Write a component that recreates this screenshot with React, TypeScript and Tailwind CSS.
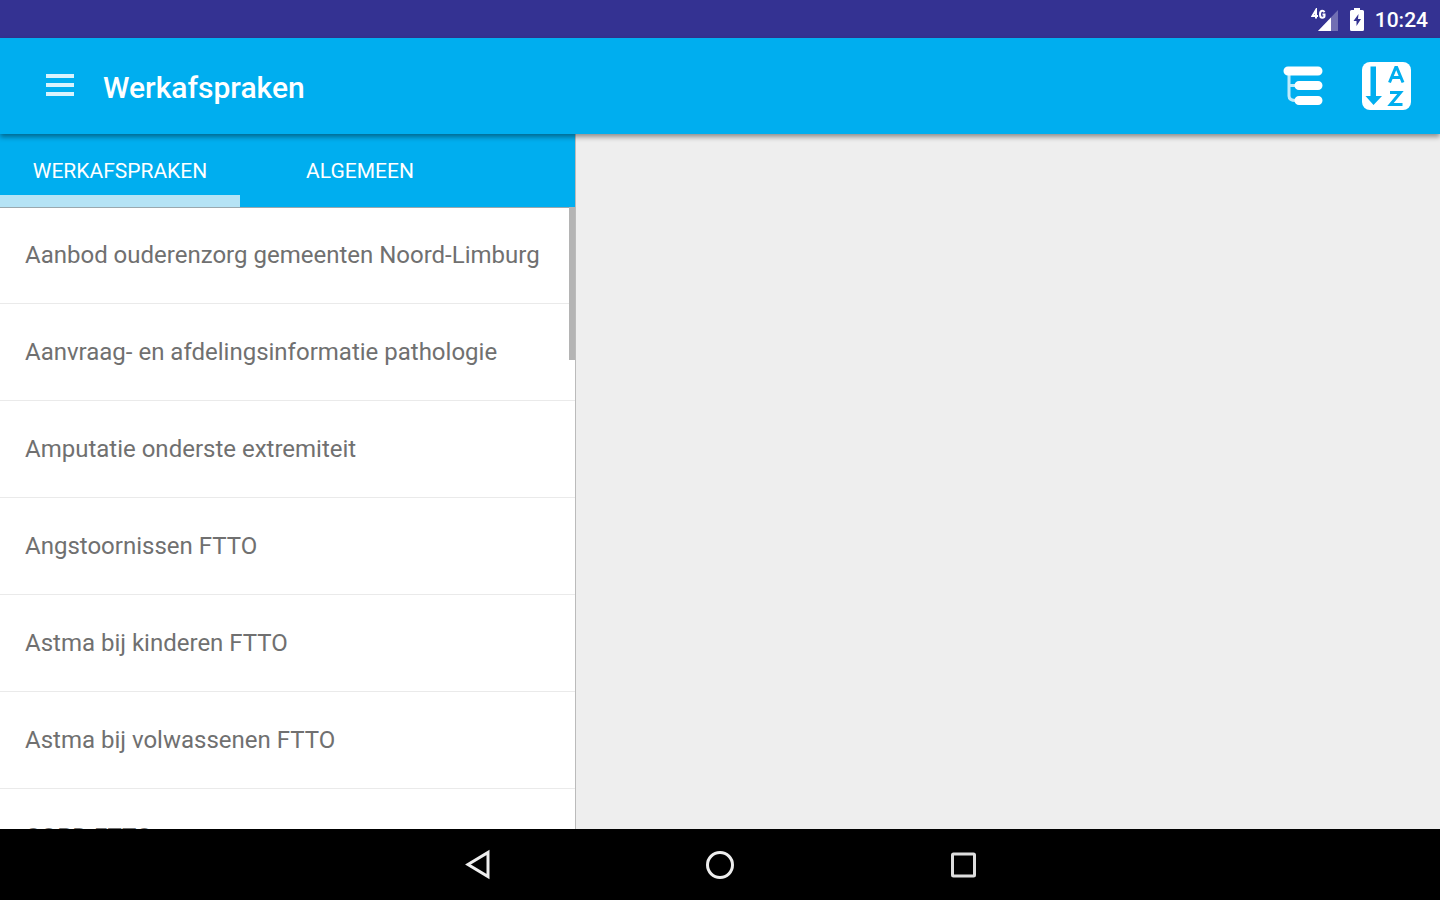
import { useState } from "react"

const tabs = ["Werkafspraken", "Algemeen"]

const items = [
    "Aanbod ouderenzorg gemeenten Noord-Limburg",
    "Aanvraag- en afdelingsinformatie pathologie",
    "Amputatie onderste extremiteit",
    "Angstoornissen FTTO",
    "Astma bij kinderen FTTO",
    "Astma bij volwassenen FTTO",
    "COPD FTTO",
]

const StatusBar = () => (
    <div className="flex h-[38px] shrink-0 items-center justify-end bg-[#343292] pt-0.5 pr-3 text-white">
        <svg className="mr-2.5 h-6 w-7" viewBox="0 0 28 24" aria-hidden="true">
            <path d="M27 2v21H7z" fill="#fff" opacity=".3" />
            <path d="M20 9.500V23H7z" fill="#fff" />
            <g fill="none" stroke="#fff" strokeWidth="2">
                <path d="M5 10.500V2L1.500 8H7" />
                <path d="M13.500 4.200c-.5-1-1.200-1.500-2.200-1.500C9.500 2.700 9 4 9 6.200s.5 3.500 2.300 3.500c1.200 0 2.200-.6 2.200-1.600V6.600h-2" />
            </g>
        </svg>
        <svg className="mr-2.5 h-6 w-4" viewBox="0 0 16 24" aria-hidden="true">
            <path d="M5 0h6v2h2.500q1.500 0 1.500 1.500v18q0 1.500-1.500 1.500h-11Q1 23 1 21.500v-18Q1 2 2.500 2H5z" fill="#fff" />
            <path d="M9.500 6L4.500 13h3v5l4.500-7H9z" fill="#343292" />
        </svg>
        <span className="text-[21px] leading-6 font-medium">10:24</span>
    </div>
)

const AppBar = () => (
    <header className="relative z-10 flex h-24 shrink-0 items-center bg-[#00aeef] pr-7 pl-[45px] text-white shadow-[0_3px_5px_rgba(0,0,0,0.4)]">
        <button type="button" aria-label="Menu">
            <svg className="h-8 w-[30px]" viewBox="0 0 30 32" fill="#d9f3fd">
                <path d="M1 4h28v4H1zM1 13h28v4H1zM1 22h28v4H1z" />
            </svg>
        </button>
        <h1 className="ml-7 flex-1 pt-1 text-[30px] leading-9 font-medium">Werkafspraken</h1>
        <button type="button" aria-label="Boomstructuur">
            <svg className="h-12 w-11" viewBox="0 0 44 48" fill="none" stroke="#fff" strokeLinecap="round">
                <path d="M8 9h30M19 23.500h19M19 38.500h19" strokeWidth="9" />
                <path d="M9 12v22q0 4.500 7 4.500M9 23.500h6" strokeWidth="3" opacity=".75" />
            </svg>
        </button>
        <button type="button" aria-label="Sorteren" className="ml-[38px]">
            <svg className="h-[50px] w-[50px]" viewBox="0 0 50 50">
                <rect x="0" y="1" width="49" height="48" rx="8" fill="#fff" />
                <path d="M8.500 5.500H14V35h6l-8.500 9L3.500 35h5z" fill="#00aeef" />
                <g fill="none" stroke="#00aeef" strokeWidth="3">
                    <path d="M27.500 21.500L33.700 6.500h1L41 21.500M29.500 16.500h9.500" />
                    <path d="M28 31.500h10.500L28.500 43.500H40.500" />
                </g>
            </svg>
        </button>
    </header>
)

const NavBar = () => (
    <nav className="flex h-[71px] shrink-0 items-center justify-center gap-[203px] bg-black">
        <button type="button" aria-label="Terug">
            <svg className="h-10 w-10" viewBox="0 0 40 40" fill="none" stroke="#eee" strokeWidth="3">
                <path d="M31 7.500v24L11 19.500z" />
            </svg>
        </button>
        <button type="button" aria-label="Start">
            <svg className="h-10 w-10" viewBox="0 0 40 40" fill="none" stroke="#eee" strokeWidth="3">
                <circle cx="20" cy="20" r="12.500" />
            </svg>
        </button>
        <button type="button" aria-label="Recent">
            <svg className="h-10 w-10" viewBox="0 0 40 40" fill="none" stroke="#ddd" strokeWidth="3">
                <rect x="9.500" y="9" width="22" height="22" rx="1" />
            </svg>
        </button>
    </nav>
)

export default function App() {
    const [active, setActive] = useState(0)

    return (
        <div className="flex h-screen flex-col overflow-hidden bg-[#eeeeee] font-['Roboto',sans-serif]">
            <StatusBar />
            <AppBar />
            <main className="flex min-h-0 flex-1">
                <section className="relative flex w-2/5 flex-col border-r border-[#bbbbbb] bg-white">
                    <div role="tablist" className="flex h-[73px] shrink-0 bg-[#00aeef]">
                        {tabs.map((tab, i) => (
                            <button
                                key={tab}
                                type="button"
                                role="tab"
                                aria-selected={active === i}
                                onClick={() => setActive(i)}
                                className={`w-60 border-b-12 pt-3 text-[21px] leading-6 text-white uppercase ${active === i ? "border-[#b5e3f5]" : "border-transparent"}`}
                            >
                                {tab}
                            </button>
                        ))}
                    </div>
                    <ul className="min-h-0 flex-1 overflow-hidden shadow-[inset_0_1px_0_#9aa8ae]">
                        {items.map((item) => (
                            <li key={item} className="border-b border-[#eaeaea]">
                                <a href="#" className="flex h-24 items-center px-[25px] text-2xl whitespace-nowrap text-[#707070]">
                                    {item}
                                </a>
                            </li>
                        ))}
                    </ul>
                    <div className="absolute top-[73px] right-0 h-[153px] w-1.5 bg-[#b4b4b4]" />
                </section>
                <section className="flex-1" />
            </main>
            <NavBar />
        </div>
    )
}
